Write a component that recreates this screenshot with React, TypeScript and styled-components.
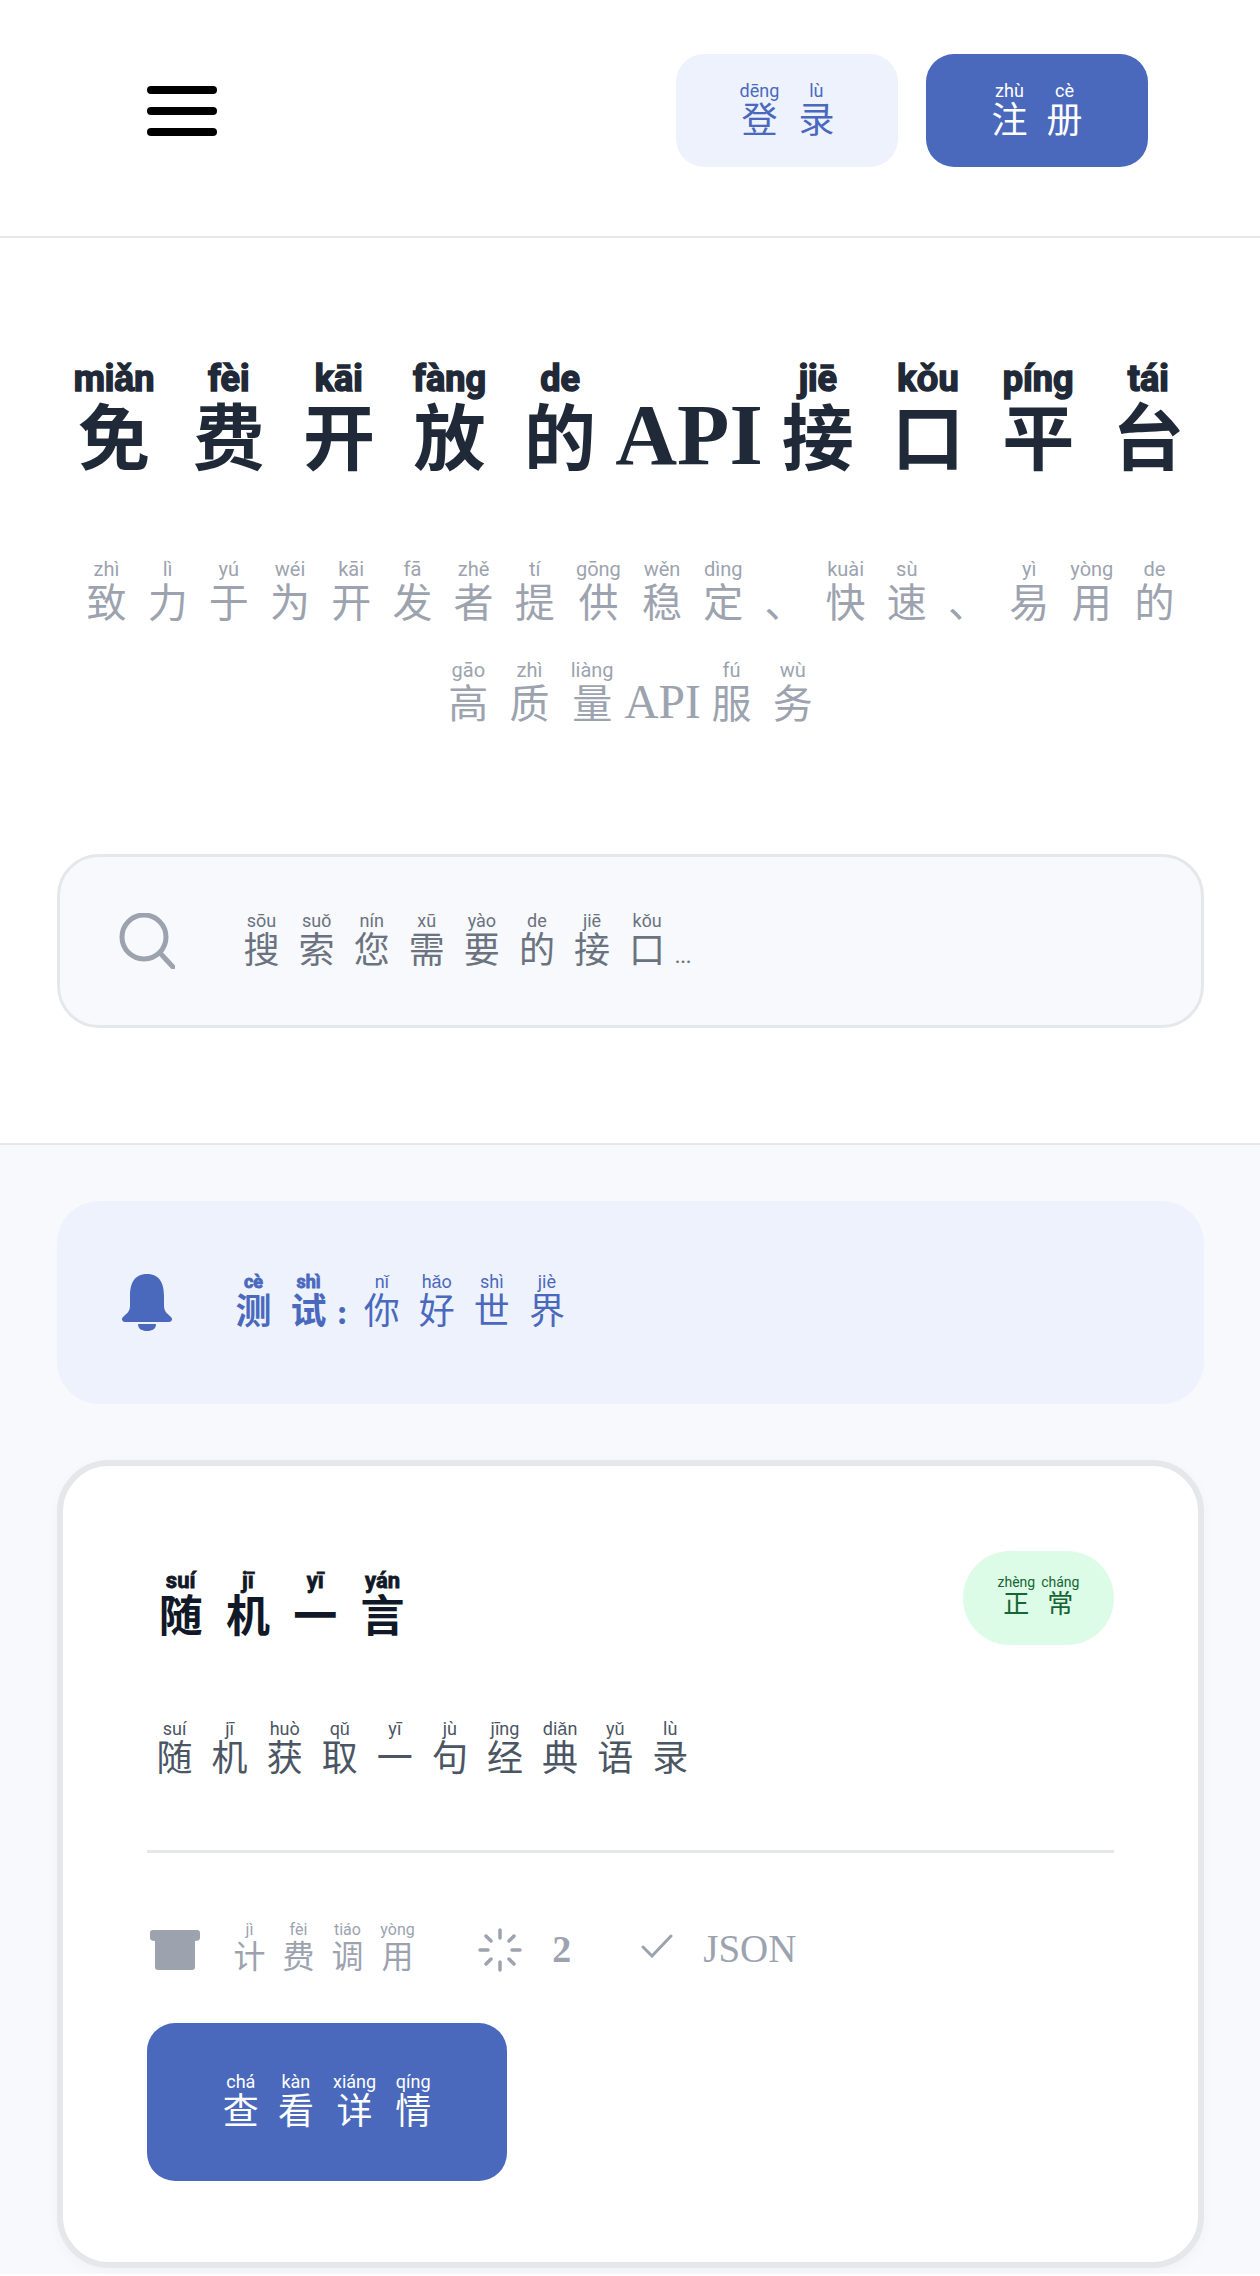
import React from 'react';
import styled, { createGlobalStyle } from 'styled-components';

const CJK = '"Liberation Serif", "Noto Sans CJK SC", serif';

const GlobalStyle = createGlobalStyle`
  html, body {
    margin: 0;
    padding: 0;
    background: #ffffff;
  }
  body {
    font-family: ${CJK};
  }
  rt {
    font-family: Roboto, "Liberation Sans", sans-serif;
  }
`;

const Char = styled.ruby`
  padding: 0 0.265em;
`;

const Latin = styled.span`
  font-size: 1.19em;
`;

// "登:dēng 录:lù" -> ruby chars, anything without ":" stays plain
function Pin({ t }: { t: string }) {
  return (
    <>
      {t.split(' ').map((part, i) => {
        const [han, py] = part.split(':');
        if (py === undefined) return <Latin key={i}>{han}</Latin>;
        return (
          <Char key={i}>
            {han}
            <rt>{py}</rt>
          </Char>
        );
      })}
    </>
  );
}

const Header = styled.header`
  display: flex;
  align-items: center;
  justify-content: space-between;
  height: 238px;
  padding: 0 112px 16px 147px;
  box-sizing: border-box;
  border-bottom: 2px solid #e5e7eb;
`;

const MenuIcon = styled.svg`
  display: block;
  width: 70px;
  height: 53px;
`;

const HeaderActions = styled.div`
  display: flex;
  gap: 28px;
`;

const HeaderButton = styled.div<{ $primary?: boolean }>`
  width: 222px;
  height: 113px;
  padding-top: 6px;
  box-sizing: border-box;
  display: flex;
  align-items: center;
  justify-content: center;
  border-radius: 28px;
  font-size: 36px;
  line-height: 1.2;
  background: ${(p) => (p.$primary ? '#4a69bd' : '#eef2fd')};
  color: ${(p) => (p.$primary ? '#ffffff' : '#4a69bd')};
`;

const Hero = styled.section`
  height: 907px;
  padding: 125px 56px 0 57px;
  box-sizing: border-box;
  border-bottom: 2px solid #e5e7eb;
  text-align: center;
`;

const Title = styled.h1`
  margin: 0 0 0 -3px;
  font-size: 72px;
  font-weight: 700;
  line-height: 1.2;
  color: #1f2937;
  white-space: nowrap;

  rt {
    -webkit-text-stroke: 1.5px #1f2937;
  }
`;

const Subtitle = styled.p`
  margin: 66px 0 0;
  font-size: 40px;
  line-height: 99px;
  color: #9ca3af;
`;

const SearchBox = styled.div`
  display: flex;
  align-items: center;
  gap: 58px;
  height: 174px;
  margin-top: 100px;
  padding: 0 59px;
  box-sizing: border-box;
  border: 3px solid #e5e7eb;
  border-radius: 42px;
  background: #f7f9fc;
  font-size: 36px;
  color: #6b7280;
  text-align: left;
`;

const SearchText = styled.div`
  margin: 5px 0 0 1px;
`;

const Ellipsis = styled.span`
  font-size: 22px;
`;

const Main = styled.main`
  display: flex;
  flex-direction: column;
  gap: 56px;
  padding: 56px 56px 6px 57px;
  background: #f7f9fc;
`;

const Notice = styled.div`
  display: flex;
  align-items: center;
  gap: 54px;
  height: 203px;
  padding: 0 65px;
  box-sizing: border-box;
  border-radius: 42px;
  background: #eef2fd;
  color: #4a69bd;
  font-size: 36px;
`;

const NoticeText = styled.div`
  margin-top: 3px;
`;

const NoticeLead = styled.b`
  margin-right: 6px;
  font-weight: 700;

  rt {
    -webkit-text-stroke: 0.8px #4a69bd;
  }
`;

const Card = styled.article`
  height: 808px;
  padding: 85px 84px 0 84px;
  box-sizing: border-box;
  border: 6px solid #e5e7eb;
  border-radius: 52px;
  background: #ffffff;
  box-shadow: 0 4px 14px rgba(0, 0, 0, 0.03);
`;

const CardHead = styled.div`
  display: flex;
  align-items: flex-start;
  justify-content: space-between;
  height: 94px;
`;

const CardTitle = styled.h2`
  margin: 20px 0 0;
  font-size: 44px;
  font-weight: 700;
  line-height: 1.2;
  color: #111827;

  rt {
    -webkit-text-stroke: 0.8px #111827;
  }
`;

const Badge = styled.span`
  display: flex;
  align-items: center;
  justify-content: center;
  width: 151px;
  height: 94px;
  border-radius: 47px;
  background: #dcfce7;
  color: #166534;
  font-size: 26px;
  line-height: 1.2;
  white-space: nowrap;

  ruby {
    padding: 0 3px;
  }
  rt {
    font-size: 14px;
  }
`;

const CardDesc = styled.p`
  margin: 76px 0 0;
  font-size: 36px;
  line-height: 1.2;
  color: #4b5563;
`;

const Divider = styled.hr`
  margin: 69px 0 0;
  border: 0;
  border-top: 3px solid #e5e7eb;
`;

const Meta = styled.div`
  display: flex;
  align-items: center;
  gap: 55px;
  margin-top: 70px;
  color: #9ca3af;
  font-size: 32px;
  line-height: 1.2;
`;

const MetaItem = styled.div`
  display: flex;
  align-items: center;
  gap: 30px;
`;

const BillingIcon = styled.svg`
  margin-left: 3px;
`;

const MetaLabel = styled.div`
  margin-left: -5px;
`;

const MetaCount = styled.b`
  margin-right: 15px;
  font-size: 38px;
  font-weight: 700;
`;

const CheckIcon = styled.svg`
  margin-top: -8px;
`;

const MetaLatin = styled.span`
  font-size: 39px;
`;

const DetailButton = styled.div`
  display: flex;
  align-items: center;
  justify-content: center;
  width: 360px;
  height: 158px;
  padding-top: 6px;
  box-sizing: border-box;
  margin-top: 46px;
  border-radius: 28px;
  background: #4a69bd;
  color: #ffffff;
  font-size: 36px;
  line-height: 1.2;
`;

export default function App() {
  return (
    <>
      <GlobalStyle />
      <Header>
        <MenuIcon viewBox="0 0 70 53" aria-label="menu">
          <g stroke="#000000" strokeWidth="8" strokeLinecap="round">
            <line x1="4" y1="6" x2="66" y2="6" />
            <line x1="4" y1="27" x2="66" y2="27" />
            <line x1="4" y1="48" x2="66" y2="48" />
          </g>
        </MenuIcon>
        <HeaderActions>
          <HeaderButton>
            <div>
              <Pin t="登:dēng 录:lù" />
            </div>
          </HeaderButton>
          <HeaderButton $primary>
            <div>
              <Pin t="注:zhù 册:cè" />
            </div>
          </HeaderButton>
        </HeaderActions>
      </Header>

      <Hero>
        <Title>
          <Pin t="免:miǎn 费:fèi 开:kāi 放:fàng 的:de API 接:jiē 口:kǒu 平:píng 台:tái" />
        </Title>
        <Subtitle>
          <Pin t="致:zhì 力:lì 于:yú 为:wéi 开:kāi 发:fā 者:zhě 提:tí 供:gōng 稳:wěn 定:dìng 、: 快:kuài 速:sù 、: 易:yì 用:yòng 的:de 高:gāo 质:zhì 量:liàng API 服:fú 务:wù" />
        </Subtitle>
        <SearchBox>
          <svg width="56" height="56" viewBox="0 0 56 56" fill="none" stroke="#9ca3af" strokeWidth="5" strokeLinecap="round">
            <circle cx="25" cy="24" r="22" />
            <line x1="41" y1="40" x2="54" y2="54" />
          </svg>
          <SearchText>
            <Pin t="搜:sōu 索:suǒ 您:nín 需:xū 要:yào 的:de 接:jiē 口:kǒu" />
            <Ellipsis>...</Ellipsis>
          </SearchText>
        </SearchBox>
      </Hero>

      <Main>
        <Notice>
          <svg width="50" height="57" viewBox="0 0 50 57" fill="#4a69bd">
            <path d="M25 0C12 0 8 10 8 22V32C8 38 4 40 1 43C-1 45 0 48 3 48H47C50 48 51 45 49 43C46 40 42 38 42 32V22C42 10 38 0 25 0Z" />
            <path d="M16 50H34C34 55 30 57 25 57C20 57 16 55 16 50Z" />
          </svg>
          <NoticeText>
            <NoticeLead>
              <Pin t="测:cè 试:shì" />:
            </NoticeLead>
            <Pin t="你:nǐ 好:hǎo 世:shì 界:jiè" />
          </NoticeText>
        </Notice>

        <Card>
          <CardHead>
            <CardTitle>
              <Pin t="随:suí 机:jī 一:yī 言:yán" />
            </CardTitle>
            <Badge>
              <div>
                <Pin t="正:zhèng 常:cháng" />
              </div>
            </Badge>
          </CardHead>
          <CardDesc>
            <Pin t="随:suí 机:jī 获:huò 取:qǔ 一:yī 句:jù 经:jīng 典:diǎn 语:yǔ 录:lù" />
          </CardDesc>
          <Divider />
          <Meta>
            <MetaItem>
              <BillingIcon width="50" height="40" viewBox="0 0 50 40" fill="#9ca3af">
                <path d="M3 0H47C49 0 50 1 50 3V8C50 10 48 11 45 11V37C45 39 44 40 42 40H8C6 40 5 39 5 37V11C2 11 0 10 0 8V3C0 1 1 0 3 0Z" />
              </BillingIcon>
              <MetaLabel>
                <Pin t="计:jì 费:fèi 调:tiáo 用:yòng" />
              </MetaLabel>
            </MetaItem>
            <MetaItem>
              <svg width="44" height="44" viewBox="0 0 44 44" fill="none" stroke="#9ca3af" strokeWidth="3.5" strokeLinecap="round">
                <path d="M22 2V10M22 34V42M2 22H10M34 22H42M8 8L13 13M31 31L36 36M8 36L13 31M31 13L36 8" />
              </svg>
              <MetaCount>2</MetaCount>
            </MetaItem>
            <MetaItem>
              <CheckIcon width="32" height="24" viewBox="0 0 32 24" fill="none" stroke="#9ca3af" strokeWidth="3" strokeLinecap="round">
                <path d="M2 13L11 22L30 2" />
              </CheckIcon>
              <MetaLatin>JSON</MetaLatin>
            </MetaItem>
          </Meta>
          <DetailButton>
            <div>
              <Pin t="查:chá 看:kàn 详:xiáng 情:qíng" />
            </div>
          </DetailButton>
        </Card>
      </Main>
    </>
  );
}
